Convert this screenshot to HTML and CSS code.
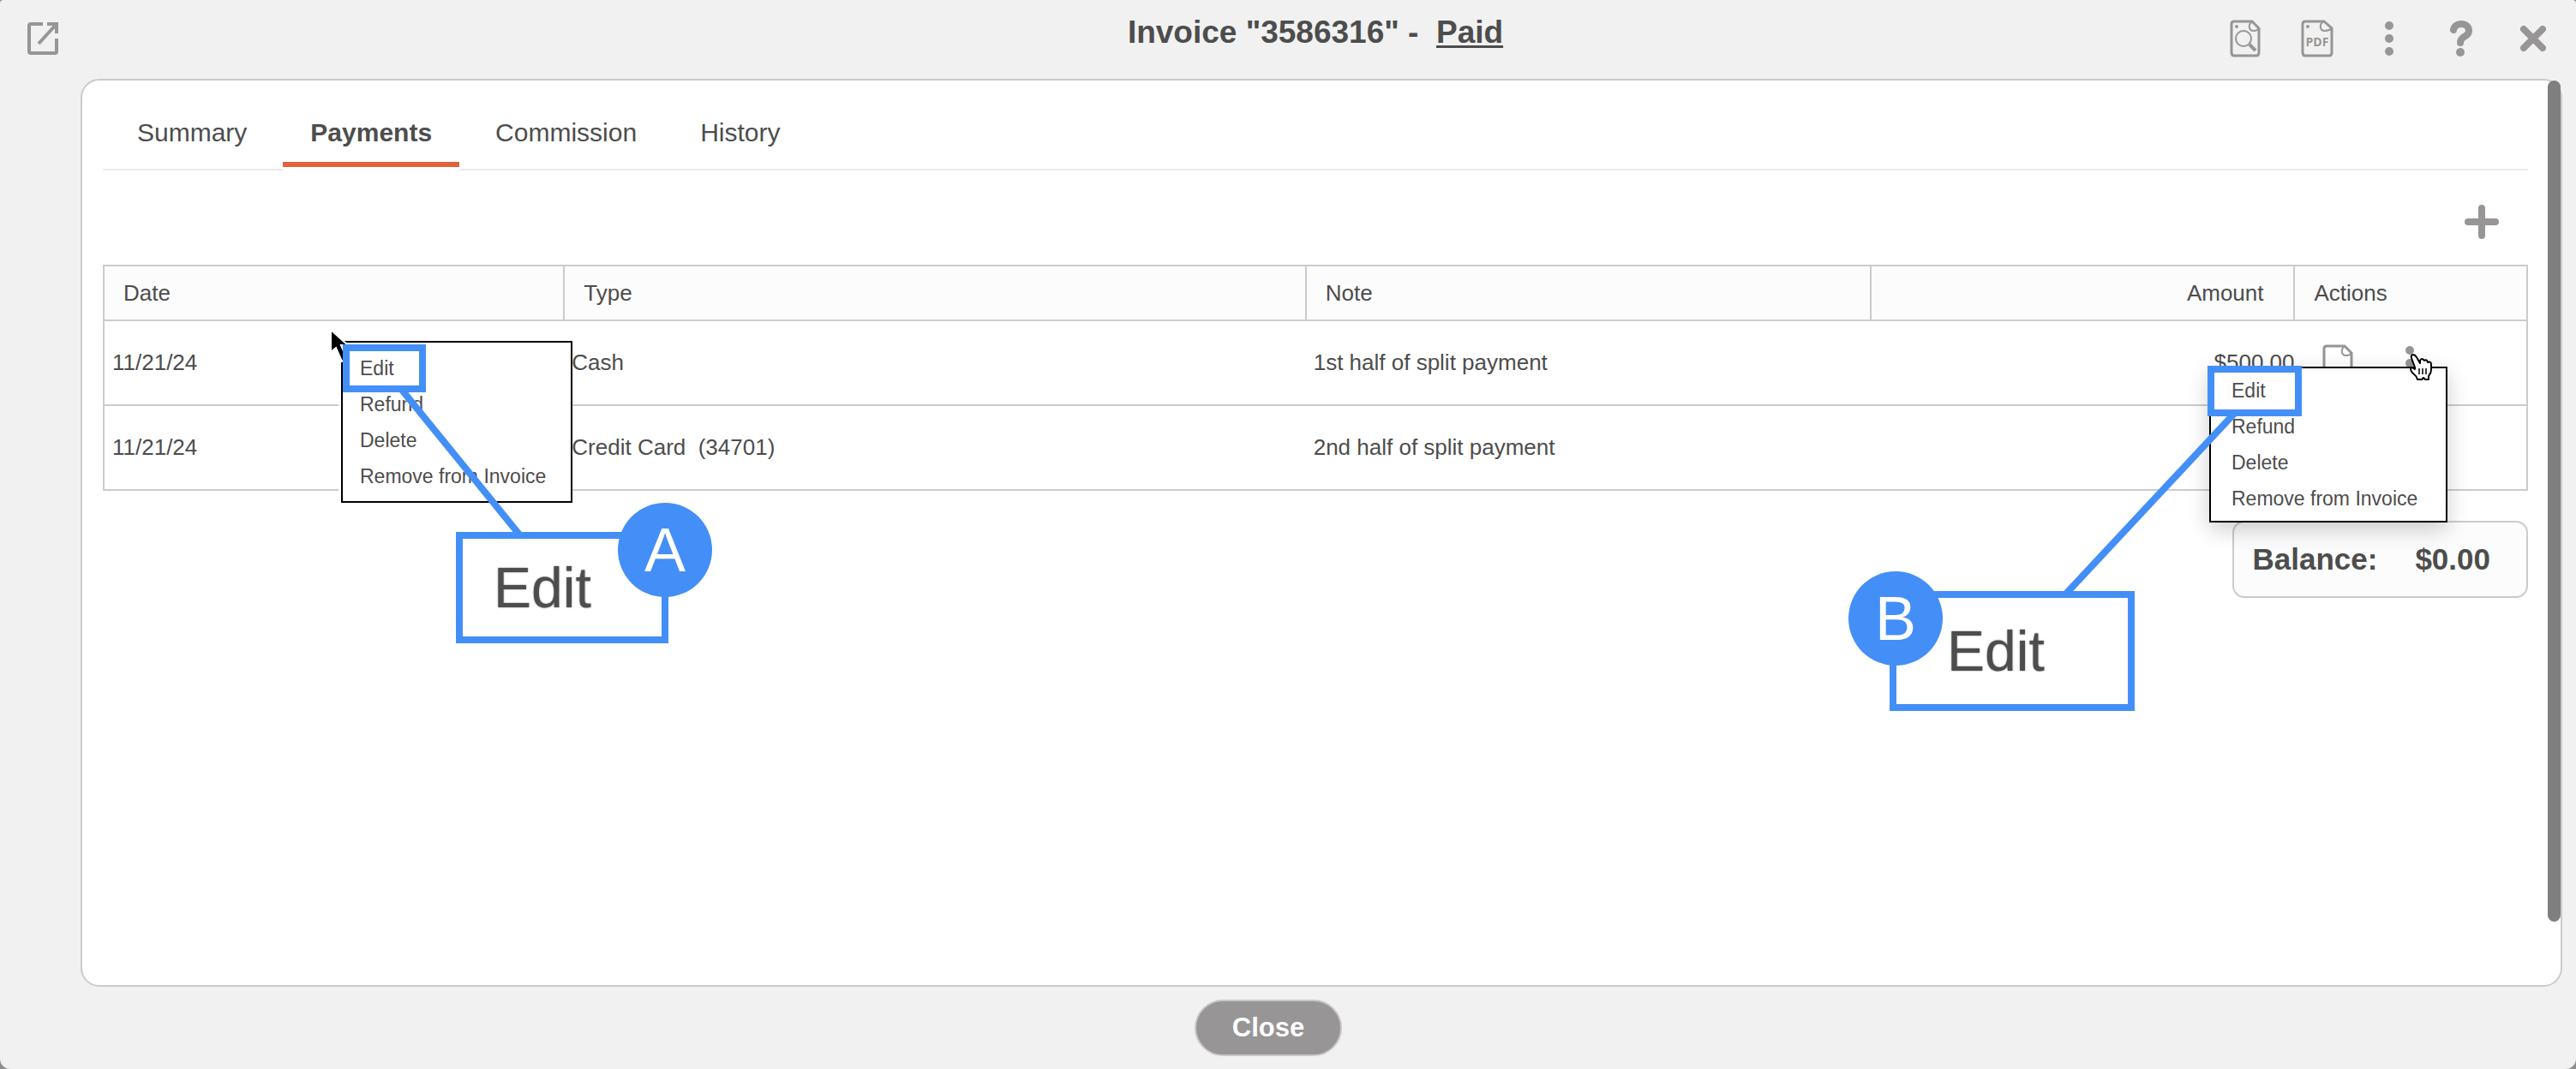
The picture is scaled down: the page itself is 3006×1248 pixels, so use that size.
FILE: index.html
```html
<!DOCTYPE html>
<html lang="en">
<head>
  <meta charset="UTF-8" />
  <meta name="viewport" content="width=device-width, initial-scale=1.0"/>
  <title>Invoice "3586316" - Paid</title>
  <link rel="stylesheet" href="styles.css">
</head>
<body>
  <div class="modal">
    <header class="topbar">
      <div class="topbar-left">
        <button class="icon-btn" aria-label="Open in new window">
          <svg width="36" height="38" viewBox="0 0 36 38" fill="none" stroke="#979595" stroke-width="4">
            <path d="M18 2H4Q2 2 2 4V34Q2 36 4 36H32Q34 36 34 34V19"/>
            <path d="M23 2H34V13M34 2L13 25"/>
          </svg>
        </button>
      </div>
      <h1>Invoice "3586316" -&nbsp; <a href="#">Paid</a></h1>
      <div class="topbar-right">
        <button class="icon-btn" aria-label="Preview">
          <svg width="36" height="44" viewBox="0 0 36 44" fill="none" stroke="#979595" stroke-width="2">
            <path stroke-width="3" d="M5 2H26L34 10V38Q34 42 31 42H5Q2 42 2 38V5Q2 2 5 2Z"/>
            <path d="M26 2C21 6 22 13 28 13Q32 13 34 10"/>
            <circle cx="8" cy="8" r="2" fill="#979595" stroke="none"/>
            <circle cx="16" cy="22" r="9"/>
            <path stroke-width="4" d="M23 29L30 36"/>
          </svg>
        </button>
        <button class="icon-btn" aria-label="Download PDF">
          <svg width="38" height="44" viewBox="0 0 38 44" fill="none" stroke="#979595" stroke-width="2">
            <path stroke-width="3" d="M5 2H27L36 10V38Q36 42 33 42H5Q2 42 2 38V5Q2 2 5 2Z"/>
            <path d="M26 2C21 6 22 13 28 13Q33 13 36 10"/>
            <circle cx="8" cy="8" r="2" fill="#979595" stroke="none"/>
            <text class="pdf" x="19" y="31" text-anchor="middle">PDF</text>
          </svg>
        </button>
        <button class="icon-btn" aria-label="More">
          <svg width="10" height="40" viewBox="0 0 10 40" fill="#979595"><circle cx="5" cy="5" r="5"/><circle cx="5" cy="20" r="5"/><circle cx="5" cy="35" r="5"/></svg>
        </button>
        <button class="icon-btn" aria-label="Help">
          <svg width="26" height="42" viewBox="0 0 26 42" fill="none">
            <path d="M4 11C5 6 9 4 13 4C18 4 22 7 22 12C22 20 12 17 12 26" stroke="#979595" stroke-width="8" stroke-linecap="round"/>
            <circle cx="12" cy="37" r="5" fill="#979595"/>
          </svg>
        </button>
        <button class="icon-btn" aria-label="Close window">
          <svg width="30" height="30" viewBox="0 0 30 30" stroke="#979595" stroke-width="8" stroke-linecap="round"><path d="M4 4L26 26M26 4L4 26"/></svg>
        </button>
      </div>
    </header>

    <main class="panel">
      <nav class="tabs">
        <a class="tab" href="#">Summary</a>
        <a class="tab active" href="#">Payments</a>
        <a class="tab" href="#">Commission</a>
        <a class="tab" href="#">History</a>
      </nav>

      <div class="toolbar">
        <button class="add-btn" aria-label="Add payment">
          <svg width="40" height="40" viewBox="0 0 40 40" stroke="#979595" stroke-width="8" stroke-linecap="round"><path d="M20 4V36M4 20H36"/></svg>
        </button>
      </div>

      <table class="payments">
        <thead>
          <tr>
            <th class="col-date">Date</th>
            <th class="col-type">Type</th>
            <th class="col-note">Note</th>
            <th class="col-amount">Amount</th>
            <th class="col-actions">Actions</th>
          </tr>
        </thead>
        <tbody>
          <tr>
            <td>11/21/24</td>
            <td>Cash</td>
            <td>1st half of split payment</td>
            <td class="amount">$500.00</td>
            <td>
              <div class="row-actions">
                <button class="icon-btn" aria-label="Document">
                  <svg width="36" height="44" viewBox="0 0 36 44" fill="none" stroke="#979595" stroke-width="2"><path stroke-width="3" d="M5 2H26L34 10V38Q34 42 31 42H5Q2 42 2 38V5Q2 2 5 2Z"/><path d="M26 2C21 6 22 13 28 13Q32 13 34 10"/></svg>
                </button>
                <button class="icon-btn" aria-label="Row menu">
                  <svg width="10" height="40" viewBox="0 0 10 40" fill="#979595"><circle cx="5" cy="5" r="5"/><circle cx="5" cy="20" r="5"/><circle cx="5" cy="35" r="5"/></svg>
                </button>
              </div>
            </td>
          </tr>
          <tr>
            <td>11/21/24</td>
            <td>Credit Card&nbsp; (34701)</td>
            <td>2nd half of split payment</td>
            <td></td>
            <td></td>
          </tr>
        </tbody>
      </table>

      <div class="balance"><span>Balance:</span><span>$0.00</span></div>

      <!-- A: right click menu -->
      <div class="guide guide-a">
        <div class="menu">
          <button>Edit</button>
          <button>Refund</button>
          <button>Delete</button>
          <button>Remove from Invoice</button>
        </div>
        <svg class="cursor" width="26" height="40" viewBox="0 0 26 40"><path d="M1 1V27L7 22L14 38L20 35L13 19H21Z" fill="#000" stroke="#fff" stroke-width="2"/></svg>
        <svg class="line" width="436" height="353"><path d="M70 56L208 226" stroke="#438ff7" stroke-width="8"/></svg>
        <div class="highlight"></div>
        <div class="callout">Edit</div>
        <div class="badge">A</div>
      </div>

      <!-- B: row actions menu -->
      <div class="guide guide-b">
        <div class="menu">
          <button>Edit</button>
          <button>Refund</button>
          <button>Delete</button>
          <button>Remove from Invoice</button>
        </div>
        <svg class="cursor" width="30" height="34" viewBox="0 0 30 34">
          <path d="M7 17L3 6Q2 2 5 2Q7 2 9 5L13 12V9Q15 5 18 9Q21 7 22 11Q26 9 26 14V20Q26 23 23 27V31H19L17 29L15 31H10Q9 27 6 25Q2 22 2 18Q3 16 7 19Z" fill="#fff" stroke="#000" stroke-width="2" stroke-linejoin="round"/>
          <path d="M12 18V25M16 18V25M20 18V25" stroke="#000" stroke-width="1.5"/>
        </svg>
        <svg class="line" width="699" height="403"><path d="M450 56L254 266" stroke="#438ff7" stroke-width="8"/></svg>
        <div class="highlight"></div>
        <div class="callout">Edit</div>
        <div class="badge">B</div>
      </div>

      <div class="scroll-thumb"></div>
    </main>

    <footer class="bottombar">
      <button class="close-btn">Close</button>
    </footer>
  </div>
</body>
</html>
```
FILE: styles.css
```css
:root {
  --bg: #f1f1f1;
  --line: #cbcbcb;
  --icon: #979595;
  --text: #4d4d4d;
  --accent: #e0633c;
  --blue: #438ff7;
}
* { margin: 0; padding: 0; box-sizing: border-box; }
body {
  font-family: "Liberation Sans", Arial, sans-serif;
  font-size: 26px;
  color: var(--text);
  background: #8c8c8c;
}
button {
  font: inherit;
  color: inherit;
  background: none;
  border: none;
  cursor: pointer;
}
svg { display: block; }
.modal {
  display: flex;
  flex-direction: column;
  min-height: 100vh;
  background: var(--bg);
  border-radius: 4px 4px 12px 12px;
}
.topbar {
  display: grid;
  grid-template-columns: 1fr auto 1fr;
  align-items: center;
  height: 92px;
  padding: 0 8px 2px;
}
.topbar h1 {
  margin-left: 64px;
  padding-bottom: 14px;
  font-size: 37px;
  line-height: 44px;
}
.topbar h1 a {
  color: inherit;
  text-decoration-thickness: 3px;
  text-underline-offset: 3px;
}
.topbar-left { display: flex; }
.topbar-right {
  display: flex;
  justify-content: flex-end;
}
.icon-btn {
  display: flex;
  align-items: center;
  justify-content: center;
  width: 84px;
  height: 48px;
}
.pdf {
  font-family: "Open Sans", sans-serif;
  font-size: 14px;
  font-weight: bold;
  fill: var(--icon);
  stroke: none;
}
.panel {
  position: relative;
  flex: 1;
  margin: 0 16px 0 94px;
  padding: 0 38px 0 24px;
  background: #fff;
  border: 2px solid var(--line);
  border-radius: 22px;
}
.tabs {
  display: flex;
  gap: 10px;
  padding: 0 8px 2px;
  border-bottom: 2px solid #ebebeb;
}
.tab {
  padding: 41px 32px 14px;
  font-size: 30px;
  line-height: 40px;
  color: inherit;
  text-decoration: none;
  border-bottom: 6px solid transparent;
}
.tab.active {
  font-weight: bold;
  border-color: var(--accent);
  box-shadow: 0 4px 0 #fff;
}
.toolbar {
  display: flex;
  justify-content: flex-end;
  height: 110px;
  padding: 40px 34px 0 0;
}
.add-btn { height: 40px; }
.payments {
  width: 100%;
  table-layout: fixed;
  border-collapse: collapse;
  border: 2px solid var(--line);
}
.payments th {
  height: 64px;
  padding: 0 22px;
  font-weight: normal;
  text-align: left;
  background: #fcfcfc;
  border: 2px solid var(--line);
}
.payments td {
  height: 99px;
  padding: 0 9px;
  border-bottom: 2px solid var(--line);
}
.payments .col-date { width: 19%; }
.payments .col-type { width: 30.6%; }
.payments .col-note { width: 23.3%; }
.payments .col-amount {
  width: 17.5%;
  padding-right: 35px;
  text-align: right;
}
.payments .amount {
  padding-right: 0;
  text-align: right;
}
.row-actions { display: flex; }
.balance {
  display: flex;
  gap: 44px;
  width: fit-content;
  margin: 35px 0 0 auto;
  padding: 0 42px 0 22px;
  font-size: 35px;
  font-weight: bold;
  line-height: 86px;
  background: #fcfcfc;
  border: 2px solid var(--line);
  border-radius: 14px;
}
.scroll-thumb {
  position: absolute;
  top: 0;
  right: 0;
  width: 15px;
  height: 93%;
  background: #7f7f7f;
  border-radius: 8px;
}

/* menus and callouts over the table */
.guide { position: absolute; }
.guide-a {
  top: 304px;
  left: 302px;
  width: 436px;
  height: 353px;
}
.guide-b {
  top: 333px;
  right: 132px;
  width: 699px;
  height: 403px;
}
.guide > * { position: absolute; }
.menu {
  background: #fff;
  border: 2px solid #000;
}
.menu button {
  display: block;
  font-size: 23px;
  line-height: 42px;
  white-space: nowrap;
}
.line { top: 0; left: 0; }
.highlight { border: 8px solid var(--blue); }
.callout {
  display: flex;
  align-items: center;
  font-size: 66px;
  background: #fff;
  border: 8px solid var(--blue);
  text-shadow: 0 0 2px #777;
}
.badge {
  width: 110px;
  height: 110px;
  font-size: 72px;
  line-height: 110px;
  text-align: center;
  color: #fff;
  background: var(--blue);
  border-radius: 50%;
}
.guide-a .menu {
  top: 0;
  left: 0;
  width: 270px;
  padding: 9px 20px 8px;
  box-shadow: -3px 0 0 #fff;
}
.guide-a .cursor { top: -14px; left: -13px; }
.guide-a .highlight { top: 4px; left: 2px; width: 97px; height: 56px; }
.guide-a .callout { top: 223px; left: 134px; width: 248px; height: 130px; padding-left: 36px; }
.guide-a .badge { top: 189px; left: 323px; }
.guide-b .menu {
  top: 1px;
  right: 0;
  width: 278px;
  padding: 5px 24px;
  box-shadow: 0 8px 24px rgba(0,0,0,0.2);
}
.guide-b .cursor { top: -15px; left: 654px; }
.guide-b .highlight { top: 0; left: 419px; width: 110px; height: 59px; }
.guide-b .callout { top: 263px; left: 48px; width: 286px; height: 140px; padding-left: 59px; }
.guide-b .badge { top: 240px; left: 0; }

.bottombar {
  display: flex;
  justify-content: center;
  padding: 15px 46px 15px 0;
}
.close-btn {
  height: 66px;
  padding: 0 42px;
  font-size: 31px;
  font-weight: bold;
  color: #fff;
  background: var(--icon);
  border: 2px solid #c8c8c8;
  border-radius: 33px;
}
```
